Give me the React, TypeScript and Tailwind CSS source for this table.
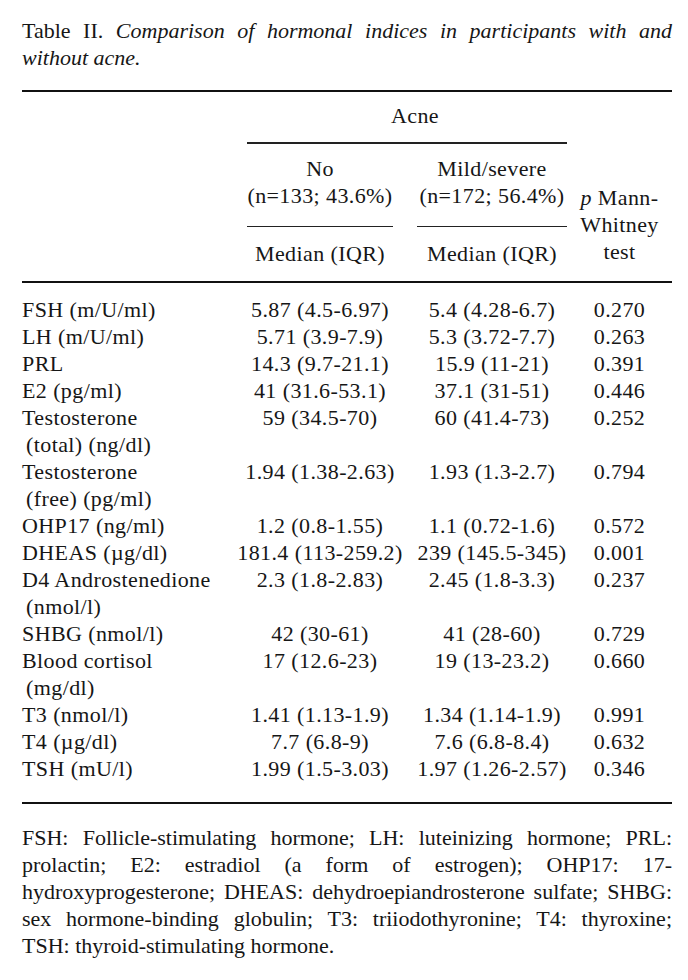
type Row = {
  label: string[];
  no: string;
  mild: string;
  p: string;
};

const rows: Row[] = [
  { label: ["FSH (m/U/ml)"], no: "5.87 (4.5-6.97)", mild: "5.4 (4.28-6.7)", p: "0.270" },
  { label: ["LH (m/U/ml)"], no: "5.71 (3.9-7.9)", mild: "5.3 (3.72-7.7)", p: "0.263" },
  { label: ["PRL"], no: "14.3 (9.7-21.1)", mild: "15.9 (11-21)", p: "0.391" },
  { label: ["E2 (pg/ml)"], no: "41 (31.6-53.1)", mild: "37.1 (31-51)", p: "0.446" },
  { label: ["Testosterone", "(total) (ng/dl)"], no: "59 (34.5-70)", mild: "60 (41.4-73)", p: "0.252" },
  { label: ["Testosterone", "(free) (pg/ml)"], no: "1.94 (1.38-2.63)", mild: "1.93 (1.3-2.7)", p: "0.794" },
  { label: ["OHP17 (ng/ml)"], no: "1.2 (0.8-1.55)", mild: "1.1 (0.72-1.6)", p: "0.572" },
  { label: ["DHEAS (µg/dl)"], no: "181.4 (113-259.2)", mild: "239 (145.5-345)", p: "0.001" },
  { label: ["D4 Androstenedione", "(nmol/l)"], no: "2.3 (1.8-2.83)", mild: "2.45 (1.8-3.3)", p: "0.237" },
  { label: ["SHBG (nmol/l)"], no: "42 (30-61)", mild: "41 (28-60)", p: "0.729" },
  { label: ["Blood cortisol", "(mg/dl)"], no: "17 (12.6-23)", mild: "19 (13-23.2)", p: "0.660" },
  { label: ["T3 (nmol/l)"], no: "1.41 (1.13-1.9)", mild: "1.34 (1.14-1.9)", p: "0.991" },
  { label: ["T4 (µg/dl)"], no: "7.7 (6.8-9)", mild: "7.6 (6.8-8.4)", p: "0.632" },
  { label: ["TSH (mU/l)"], no: "1.99 (1.5-3.03)", mild: "1.97 (1.26-2.57)", p: "0.346" },
];

const footnote = [
  "FSH: Follicle-stimulating hormone; LH: luteinizing hormone; PRL:",
  "prolactin; E2: estradiol (a form of estrogen); OHP17: 17-",
  "hydroxyprogesterone; DHEAS: dehydroepiandrosterone sulfate; SHBG:",
  "sex hormone-binding globulin; T3: triiodothyronine; T4: thyroxine;",
];

export default function App() {
  return (
    <div className="min-h-[980px] w-[688px] bg-white pl-[22px] pr-[16px] pt-[17px] font-['Liberation_Serif',serif] text-[22px] leading-[27px] text-[#161616]">
      {/* caption */}
      <div className="whitespace-nowrap text-justify [text-align-last:justify]">
        Table II. <i>Comparison of hormonal indices in participants with and</i>
      </div>
      <div>
        <i>without acne.</i>
      </div>

      <div className="mt-[19px] h-[2px] bg-[#111]" />

      {/* header */}
      <div className="flex tracking-[0.4px]">
        <div className="w-[225px] shrink-0" />
        <div className="flex w-[320px] shrink-0 flex-col">
          <div className="pt-[10px] pl-[16px] text-center">Acne</div>
          <div className="mt-[13px] h-[1.5px] bg-[#222]" />
          <div className="flex justify-between pt-[11px]">
            <div className="flex w-[146px] flex-col items-center">
              <div>No</div>
              <div className="whitespace-nowrap">(n=133; 43.6%)</div>
              <div className="mt-[17px] h-[1.5px] w-full bg-[#222]" />
              <div className="pt-[13px] whitespace-nowrap">Median (IQR)</div>
            </div>
            <div className="flex w-[150px] flex-col items-center">
              <div>Mild/severe</div>
              <div className="whitespace-nowrap">(n=172; 56.4%)</div>
              <div className="mt-[17px] h-[1.5px] w-full bg-[#222]" />
              <div className="pt-[13px] whitespace-nowrap">Median (IQR)</div>
            </div>
          </div>
        </div>
        <div className="flex w-[105px] shrink-0 flex-col justify-end pb-[2px] text-center">
          <div>
            <i>p</i> Mann-
          </div>
          <div>Whitney</div>
          <div>test</div>
        </div>
      </div>

      <div className="mt-[14px] h-[2px] bg-[#111]" />

      {/* body */}
      <div className="pt-[13px] tracking-[0.4px]">
        {rows.map((r) => (
          <div key={r.label.join(" ") + r.p} className="flex">
            <div className="w-[225px] shrink-0 whitespace-nowrap">
              {r.label.map((l, i) => (
                <div key={l} className={i > 0 ? "pl-[4px]" : ""}>
                  {l}
                </div>
              ))}
            </div>
            <div className="flex w-[146px] shrink-0 justify-center whitespace-nowrap">{r.no}</div>
            <div className="w-[24px] shrink-0" />
            <div className="flex w-[150px] shrink-0 justify-center whitespace-nowrap">{r.mild}</div>
            <div className="w-[105px] shrink-0 text-center">{r.p}</div>
          </div>
        ))}
      </div>

      <div className="mt-[20px] h-[2px] bg-[#111]" />

      {/* footnote */}
      <div className="pt-[20px]">
        {footnote.map((line) => (
          <div key={line} className="whitespace-nowrap text-justify [text-align-last:justify]">
            {line}
          </div>
        ))}
        <div>TSH: thyroid-stimulating hormone.</div>
      </div>
    </div>
  );
}
